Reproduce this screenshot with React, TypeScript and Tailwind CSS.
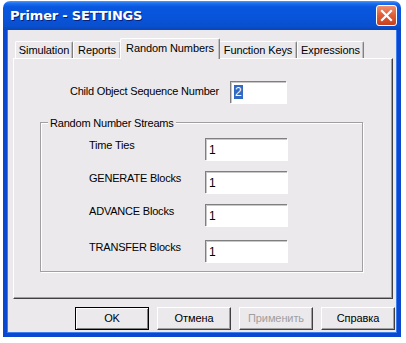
import React from "react";

const font = { fontFamily: '"Liberation Sans", Arial, sans-serif' };

function Field({ value, className = "", selected = false }: { value: string; className?: string; selected?: boolean }) {
  return (
    <div
      className={`h-[22px] bg-white border-t-[1px] border-l-[1px] border-[#7F7F7F] shadow-[inset_1px_1px_0_#C8C8C8,1px_1px_0_#FFFFFF] flex items-center pl-[3px] text-[12px] text-black ${className}`}
    >
      <span className={selected ? "bg-[#316AC5] text-white leading-[14px] px-[1px]" : ""}>{value}</span>
    </div>
  );
}

function Btn({ label, def = false, disabled = false }: { label: string; def?: boolean; disabled?: boolean }) {
  return (
    <div
      className={`w-[74px] h-[23px] flex items-center justify-center text-[11px] tracking-[-0.1px] bg-[#ECE9EC] ${
        def
          ? "border border-black shadow-[inset_1px_1px_0_#FFFFFF,inset_-1px_-1px_0_#808080]"
          : "border-t border-l border-white border-r border-b border-r-[#404040] border-b-[#404040] shadow-[inset_-1px_-1px_0_#A0A0A0]"
      } ${disabled ? "text-[#A0A0A0]" : "text-black"}`}
    >
      {label}
    </div>
  );
}

function Tab({ label, w, selected = false }: { label: string; w: number; selected?: boolean }) {
  return (
    <div
      style={{ width: w }}
      className={`flex items-center justify-center text-[11px] tracking-[-0.1px] text-black border-t border-l border-white border-r border-r-[#808080] rounded-t-[2px] shadow-[inset_-1px_0_0_#C0C0C0] ${
        selected ? "h-[21px] -mx-[1px] bg-[#ECE9EC] relative z-10 -mb-[1px] pb-[2px]" : "h-[17px] bg-[#ECE9EC]"
      }`}
    >
      {label}
    </div>
  );
}

export default function App() {
  return (
    <div className="w-[406px] h-[343px] bg-white pt-[1px] pl-[3px]" style={font}>
      <div className="w-[398px] h-[336px] flex flex-col rounded-t-[7px] overflow-hidden">
        {/* Title bar */}
        <div className="h-[29px] flex items-center justify-between pl-[7px] pr-[4px] bg-[linear-gradient(180deg,#4A9BFF_0%,#1D6EF0_8%,#0957DF_20%,#0854DA_55%,#0A50CF_85%,#0846BA_100%)]">
          <span
            className="text-white font-bold text-[13px] [text-shadow:1px_1px_0_#0A1E78]"
            style={{ fontFamily: '"DejaVu Sans", "Liberation Sans", sans-serif', fontSize: 13, letterSpacing: "-0.2px" }}
          >
            Primer - SETTINGS
          </span>
          <div className="w-[21px] h-[21px] rounded-[3px] border border-white bg-[linear-gradient(180deg,#F09070_0%,#E0603A_45%,#C8401E_100%)] flex items-center justify-center">
            <svg width="13" height="13" viewBox="0 0 13 13">
              <path d="M2 2 L11 11 M11 2 L2 11" stroke="white" strokeWidth="2.2" strokeLinecap="square" />
            </svg>
          </div>
        </div>
        {/* Client area */}
        <div className="flex-1 bg-[#ECE9EC] border-x-[4px] border-b-[4px] border-[#0A48D2] shadow-[inset_1px_0_0_#3C7EF0,inset_-1px_0_0_#3C7EF0,inset_0_-1px_0_#3C7EF0] flex flex-col pl-[6px]">
          {/* Tabs */}
          <div className="flex items-end h-[28px] pl-[2px]">
            <Tab label="Simulation" w={58} />
            <Tab label="Reports" w={48} />
            <Tab label="Random Numbers" w={100} selected />
            <Tab label="Function Keys" w={78} />
            <Tab label="Expressions" w={67} />
          </div>
          {/* Panel */}
          <div className="w-[380px] h-[241px] border-t border-l border-white border-r border-b border-r-[#404040] border-b-[#404040] shadow-[inset_-1px_-1px_0_#A0A0A0] pt-[22px]">
            <div className="flex items-center h-[21px]">
              <div className="w-[205px] text-right text-[11px] tracking-[-0.2px] text-black">Child Object Sequence Number</div>
              <Field value="2" selected className="ml-[11px] w-[56px]" />
            </div>
            <div className="ml-[26px] mt-[20px] w-[323px] h-[150px] border border-[#A0A0A0] shadow-[inset_1px_1px_0_#FFFFFF,1px_1px_0_#FFFFFF] relative pt-[15px]">
              <div className="absolute -top-[8px] left-[7px] bg-[#ECE9EC] px-[2px] text-[11px] tracking-[-0.2px] text-black">Random Number Streams</div>
              {[
                ["Time Ties", 0],
                ["GENERATE Blocks", 11],
                ["ADVANCE Blocks", 11],
                ["TRANSFER Blocks", 14],
              ].map(([l, m]) => (
                <div key={l as string} className="flex items-start h-[22px]" style={{ marginTop: m as number }}>
                  <div className="w-[164px] pl-[48px] text-[11px] tracking-[-0.2px] text-black leading-[13px] pt-[1px]">{l}</div>
                  <Field value="1" className="w-[82px]" />
                </div>
              ))}
            </div>
          </div>
          {/* Buttons */}
          <div className="flex gap-[8px] ml-[62px] mt-[8px]">
            <Btn label="OK" def />
            <Btn label="Отмена" />
            <Btn label="Применить" disabled />
            <Btn label="Справка" />
          </div>
        </div>
      </div>
    </div>
  );
}
